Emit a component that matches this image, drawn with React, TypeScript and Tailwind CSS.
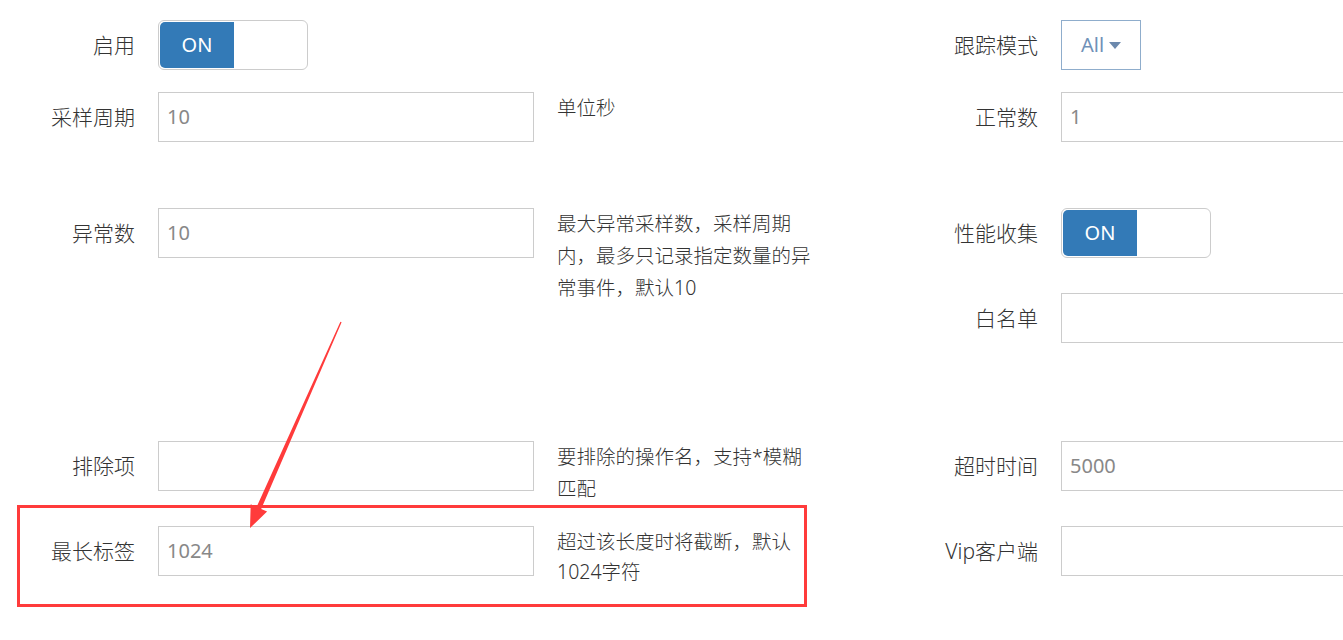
import type { ReactNode } from 'react';

const FONT = "font-['Noto_Sans','Noto_Sans_CJK_SC',sans-serif]";

function Label({ children }: { children: ReactNode }) {
  return (
    <div className="w-[135px] shrink-0 text-right text-[21px] font-light leading-[50px] text-[#333]">{children}</div>
  );
}

function TextInput({ value }: { value?: string }) {
  return (
    <div className="h-[50px] w-[376px] shrink-0 border border-[#ccc] bg-white pl-[8px] text-[20px] leading-[48px] text-[#888]">
      {value}
    </div>
  );
}

function Toggle() {
  return (
    <div className="flex h-[50px] w-[150px] shrink-0 overflow-hidden rounded-[6px] border border-[#ccc] bg-white p-[1px]">
      <div className="flex w-[74px] items-center justify-center rounded-l-[5px] bg-[#337ab7] text-[20px] text-white">
        ON
      </div>
    </div>
  );
}

function ModeSelect() {
  return (
    <div className="flex h-[50px] w-[80px] shrink-0 items-center justify-center gap-[5px] border border-[#8fadcc] bg-white text-[20px] text-[#7091b8]">
      <span>All</span>
      <svg width="12" height="7" viewBox="0 0 12 7" aria-hidden="true">
        <path d="M0 0h12L6 7z" fill="#6c89ad" />
      </svg>
    </div>
  );
}

function Help({ children }: { children: ReactNode }) {
  return <p className="w-[262px] text-[19.5px] font-light leading-[32px] text-[#333]">{children}</p>;
}

function Row({ h, children }: { h: string; children: ReactNode }) {
  return <div className={`flex shrink-0 items-start gap-[23px] ${h}`}>{children}</div>;
}

export default function App() {
  return (
    <div className={`relative h-[640px] w-[1343px] overflow-hidden bg-white ${FONT}`}>
      <div className="flex pt-[20px]">
        {/* 左列 */}
        <div className="flex w-[903px] shrink-0 flex-col">
          <Row h="h-[72px]">
            <Label>启用</Label>
            <Toggle />
          </Row>
          <Row h="h-[116px]">
            <Label>采样周期</Label>
            <TextInput value="10" />
            <Help>单位秒</Help>
          </Row>
          <Row h="h-[233px]">
            <Label>异常数</Label>
            <TextInput value="10" />
            <Help>最大异常采样数，采样周期内，最多只记录指定数量的异常事件，默认10</Help>
          </Row>
          <Row h="h-[85px]">
            <Label>排除项</Label>
            <TextInput />
            <Help>
              要排除的操作名，支持*模糊<span className="whitespace-nowrap">匹配</span>
            </Help>
          </Row>
          <Row h="h-[80px]">
            <Label>最长标签</Label>
            <TextInput value="1024" />
            <div className="pt-[1px]">
              <p className="w-[262px] text-[19.5px] font-light leading-[30px] text-[#333]">
                超过该长度时将截断，默认1024字符
              </p>
            </div>
          </Row>
        </div>

        {/* 右列 */}
        <div className="flex flex-1 flex-col">
          <Row h="h-[72px]">
            <Label>跟踪模式</Label>
            <ModeSelect />
          </Row>
          <Row h="h-[116px]">
            <Label>正常数</Label>
            <TextInput value="1" />
          </Row>
          <Row h="h-[85px]">
            <Label>性能收集</Label>
            <Toggle />
          </Row>
          <Row h="h-[148px]">
            <Label>白名单</Label>
            <TextInput />
          </Row>
          <Row h="h-[85px]">
            <Label>超时时间</Label>
            <TextInput value="5000" />
          </Row>
          <Row h="h-[80px]">
            <Label>Vip客户端</Label>
            <TextInput />
          </Row>
        </div>
      </div>

      {/* 标注：红框 + 箭头 */}
      <div className="pointer-events-none absolute left-[17px] top-[505px] h-[102px] w-[790px] border-[3px] border-[#ff3b3b]" />
      <svg
        className="pointer-events-none absolute left-0 top-0"
        width="1343"
        height="640"
        viewBox="0 0 1343 640"
        aria-hidden="true"
      >
        <polygon
          points="341.6,322.2 340.4,321.8 256.6,506.9 250.7,504.3 250,528 267.1,511.5 261.2,508.9"
          fill="#ff3b3b"
        />
      </svg>
    </div>
  );
}
